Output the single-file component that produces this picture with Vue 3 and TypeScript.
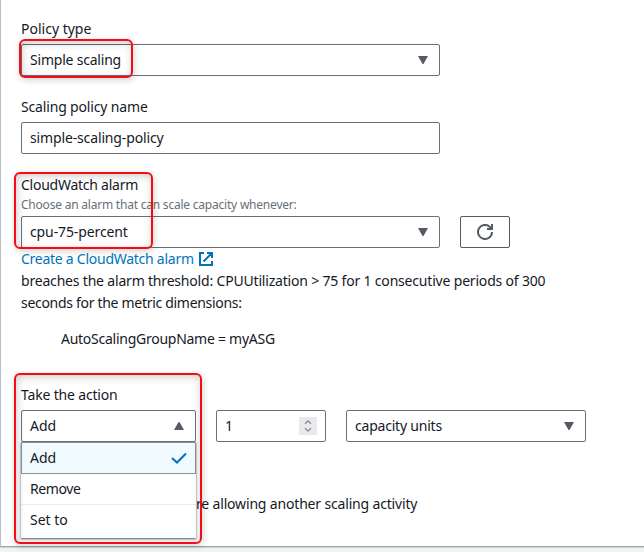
<script setup lang="ts">
import { ref } from 'vue'

const policyName = ref('simple-scaling-policy')
const amount = ref('1')
const action = ref('Add')
const actions: string[] = ['Add', 'Remove', 'Set to']
</script>

<template>
  <div class="page">
    <main class="card">
      <section class="field">
        <label class="label"><span>Policy type</span></label>
        <div class="box wide">
          <span class="t-simple">Simple scaling</span>
          <svg class="caret" viewBox="0 0 10 8"><path d="M0 0H10L5.8 7.4Q5 8.4 4.2 7.4Z" /></svg>
        </div>
      </section>

      <section class="field">
        <label class="label"><span class="t-name">Scaling policy name</span></label>
        <div class="box wide"><span class="t-policy">{{ policyName }}</span></div>
      </section>

      <section class="alarm">
        <label class="label flush"><span class="t-alarm">CloudWatch alarm</span></label>
        <div class="hint"><span class="t-hint">Choose an alarm that can scale capacity whenever:</span></div>
        <div class="row">
          <div class="box wide">
            <span class="t-cpu">cpu-75-percent</span>
            <svg class="caret" viewBox="0 0 10 8"><path d="M0 0H10L5.8 7.4Q5 8.4 4.2 7.4Z" /></svg>
          </div>
          <button class="refresh" aria-label="Refresh">
            <svg viewBox="0 0 16 16"><path d="M15 8A7 7 0 1 1 12.6 2.7L14.2 4.2M15 0V5H10" /></svg>
          </button>
        </div>
        <a class="link">
          <span class="t-link">Create a CloudWatch alarm</span>
          <svg viewBox="0 0 14 14"><path d="M5 1H1V13H13V9M8 1H13V6M13 1L4.5 9.5" /></svg>
        </a>
        <div class="line"><span class="t-l1">breaches the alarm threshold: CPUUtilization &gt; 75 for 1 consecutive periods of 300</span></div>
        <div class="line"><span class="t-l2">seconds for the metric dimensions:</span></div>
        <div class="line dimension"><span class="t-dim">AutoScalingGroupName = myASG</span></div>
      </section>

      <section class="action">
        <label class="label"><span class="t-take">Take the action</span></label>
        <div class="row">
          <div class="select">
            <div class="box">
              <span>{{ action }}</span>
              <svg class="caret up" viewBox="0 0 10 8"><path d="M0 0H10L5.8 7.4Q5 8.4 4.2 7.4Z" /></svg>
            </div>
            <ul class="menu">
              <li v-for="(item, i) in actions" :key="item" :class="['option', 'o' + i, { selected: item === action }]">
                <span>{{ item }}</span>
                <svg v-if="item === action" class="check" viewBox="0 0 16 12"><path d="M1 6L6 10.5L15 1.5" /></svg>
              </li>
            </ul>
          </div>
          <div class="box number">
            <span>{{ amount }}</span>
            <svg class="spinner" viewBox="0 0 18 18"><path d="M6 6.8L9 4L12 6.8M6 11.2L9 14L12 11.2" /></svg>
          </div>
          <div class="box units">
            <span class="t-units">capacity units</span>
            <svg class="caret" viewBox="0 0 10 8"><path d="M0 0H10L5.8 7.4Q5 8.4 4.2 7.4Z" /></svg>
          </div>
        </div>
      </section>
      <div class="cooldown"><span class="t-cool">re allowing another scaling activity</span></div>
    </main>

    <div class="mark m1"></div>
    <div class="mark m2"></div>
    <div class="mark m3"></div>
  </div>
</template>

<style>
body { margin: 0; background: #f2f3f3; }
</style>

<style scoped>
* { box-sizing: border-box; }
.page {
  position: relative;
  width: 644px;
  height: 552px;
  overflow: hidden;
  background: #f2f3f3;
  color: #16191f;
  font: 14px/22px "Noto Sans", "Open Sans", sans-serif;
  white-space: nowrap;
}
.card {
  height: 547px;
  padding: 18px 0 0 20px;
  border-left: 1px solid #b9bfc4;
  border-bottom: 1px solid #99a3a8;
  background: #fff;
  box-shadow: 0 1px 1px #d2d7d9;
}
.field { margin-bottom: 20px; }
.label { display: block; height: 22px; margin-bottom: 4px; }
.label.flush { margin-bottom: 0; }
.box {
  display: flex;
  align-items: center;
  justify-content: space-between;
  height: 32px;
  padding: 0 11px 0 8px;
  border: 1px solid #687078;
  border-radius: 2px;
  background: #fff;
}
.wide { width: 419px; }
.caret { width: 10px; height: 8px; fill: #545b64; }
.up { transform: rotate(180deg); }
.hint { height: 20px; font-size: 12px; line-height: 18px; color: #687078; }
.row { display: flex; gap: 20px; }
.refresh {
  display: flex;
  align-items: center;
  justify-content: center;
  width: 50px;
  height: 32px;
  padding: 0;
  border: 1px solid #545b64;
  border-radius: 2px;
  background: #fff;
}
.refresh svg { width: 16px; height: 16px; fill: none; stroke: #545b64; stroke-width: 2; }
.link { display: flex; align-items: center; gap: 5px; height: 22px; color: #0073bb; }
.link svg { width: 14px; height: 14px; fill: none; stroke: #0073bb; stroke-width: 2; }
.line { height: 22px; }
.dimension { margin: 14px 0 34px 40px; }
.select { position: relative; width: 175px; }
.menu {
  position: absolute;
  top: 32px;
  left: 0;
  width: 175px;
  height: 96px;
  margin: 0;
  padding: 0;
  list-style: none;
  background: #fff;
  box-shadow: 0 1px 2px #545b64;
}
.option {
  display: flex;
  align-items: center;
  justify-content: space-between;
  height: 31px;
  padding: 0 9px;
  border-bottom: 1px solid #eaeded;
}
.option:last-child { height: 30px; border-bottom: 0; }
.selected { height: 32px; padding: 0 8px; border: 1px solid #879596; background: #f1faff; }
.check { width: 16px; height: 12px; fill: none; stroke: #0073bb; stroke-width: 2; }
.number { width: 110px; padding-right: 8px; }
.spinner { width: 18px; height: 18px; background: #e9e9ed; fill: none; stroke: #8f8f9d; stroke-width: 1.5; }
.units { width: 240px; }
.cooldown { margin: 51px 0 0 175px; }

.t-simple { letter-spacing: -0.21px; }
.t-name { letter-spacing: -0.16px; }
.t-policy { letter-spacing: -0.14px; }
.t-alarm { letter-spacing: -0.25px; }
.t-hint { letter-spacing: -0.215px; }
.t-cpu { letter-spacing: -0.11px; }
.t-link { letter-spacing: -0.26px; }
.t-l1 { letter-spacing: -0.187px; }
.t-l2 { letter-spacing: -0.3px; }
.t-dim { letter-spacing: -0.26px; }
.t-take { letter-spacing: -0.17px; }
.t-units { letter-spacing: -0.21px; }
.t-cool { letter-spacing: -0.17px; }
.o1 { letter-spacing: -0.4px; }

.mark {
  position: absolute;
  border: 2px solid #f80b12;
  border-radius: 6px;
  box-shadow: 1px 2px 7px rgba(0, 0, 0, 0.18), inset 1px 2px 9px rgba(0, 0, 0, 0.2);
}
.m1 { left: 19px; top: 39px; width: 114px; height: 39px; }
.m2 { left: 14px; top: 172px; width: 139px; height: 77px; }
.m3 { left: 14px; top: 373px; width: 188px; height: 171px; }
</style>
